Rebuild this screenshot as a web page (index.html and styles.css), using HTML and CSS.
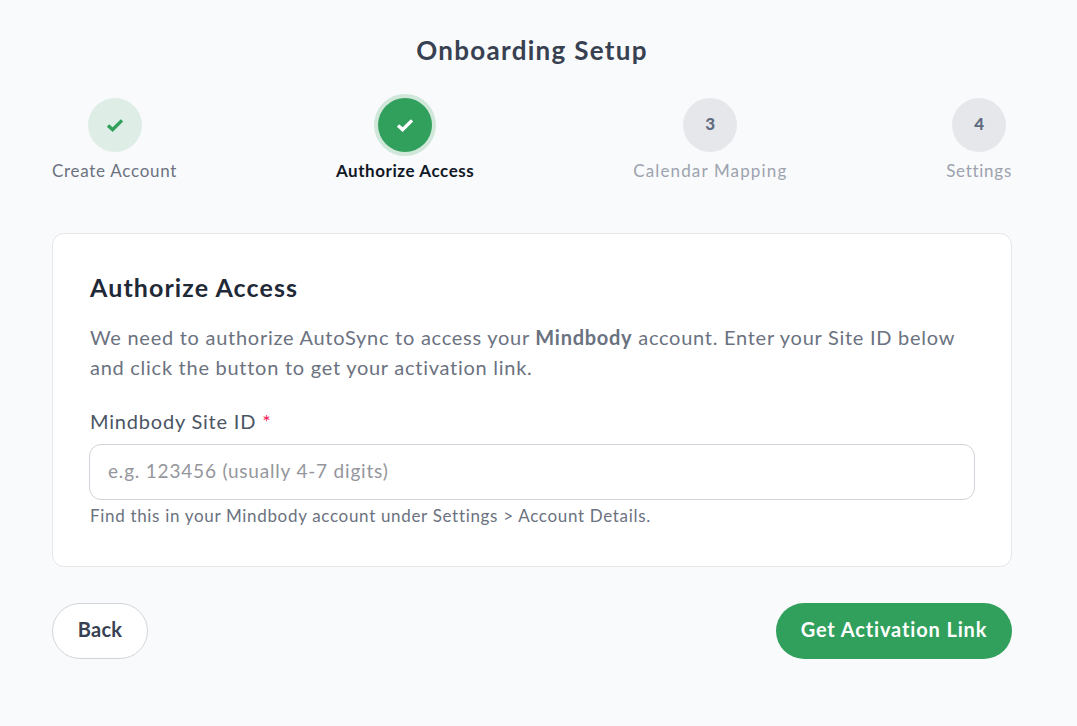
FILE: index.html
```html
<!DOCTYPE html>
<html lang="en">
<head>
<meta charset="utf-8">
<title>Onboarding Setup</title>
<link rel="stylesheet" href="styles.css">
</head>
<body>
<main class="page">
  <h1 class="title">Onboarding Setup</h1>
  <ol class="steps">
    <li class="step step-done">
      <span class="dot"><svg class="check" viewBox="0 0 18 14"><path d="M2 7.5 L6.6 11.6 L16 2.4"/></svg></span>
      <span class="step-label">Create Account</span>
    </li>
    <li class="step step-active">
      <span class="dot"><svg class="check" viewBox="0 0 18 14"><path d="M2 7.5 L6.6 11.6 L16 2.4"/></svg></span>
      <span class="step-label">Authorize Access</span>
    </li>
    <li class="step step-todo step-wide">
      <span class="dot"><span class="num">3</span></span>
      <span class="step-label">Calendar Mapping</span>
    </li>
    <li class="step step-todo">
      <span class="dot"><span class="num">4</span></span>
      <span class="step-label">Settings</span>
    </li>
  </ol>
  <section class="card">
    <h2 class="card-title">Authorize Access</h2>
    <p class="card-text">We need to authorize AutoSync to access your <strong>Mindbody</strong> account. Enter your Site ID below and click the button to get your activation link.</p>
    <label class="field-label" for="site">Mindbody Site ID <span class="req">*</span></label>
    <input class="field-input" id="site" type="text" placeholder="e.g. 123456 (usually 4-7 digits)">
    <p class="field-hint">Find this in your Mindbody account under Settings &gt; Account Details.</p>
  </section>
  <div class="actions">
    <button class="btn btn-back" type="button">Back</button>
    <button class="btn btn-primary" type="button">Get Activation Link</button>
  </div>
</main>
</body>
</html>
```
FILE: styles.css
```css
* { box-sizing: border-box; }
html, body { margin: 0; height: 100%; }
body {
  background: #f9fafb;
  color: #1f2937;
  font-family: "Lato", "Open Sans", sans-serif;
  padding-right: 13px;
}
.page {
  width: 960px;
  margin: 0 auto;
  padding-top: 34px;
}
.title {
  margin: 0;
  height: 32px;
  line-height: 32px;
  text-align: center;
  font-size: 26px;
  font-weight: 700;
  letter-spacing: 1.3px;
  color: #374151;
}
.steps {
  list-style: none;
  margin: 32px 0 0;
  padding: 0;
  display: flex;
  justify-content: space-between;
}
.step {
  display: flex;
  flex-direction: column;
  align-items: center;
}
.dot {
  width: 54px;
  height: 54px;
  border-radius: 50%;
  display: flex;
  align-items: center;
  justify-content: center;
  font-size: 17px;
  font-weight: 900;
}
.num { margin-bottom: 3px; }
.check {
  width: 18px;
  height: 14px;
  fill: none;
  stroke: currentColor;
  stroke-width: 3.4;
}
.step-label {
  margin-top: 9px;
  height: 20px;
  line-height: 20px;
  font-size: 17px;
  letter-spacing: 0.72px;
  white-space: nowrap;
}
.step-done .dot { background: #deede6; color: #31a05c; }
.step-done .step-label { color: #6b7280; }
.step-active .dot {
  background: #31a05c;
  color: #fff;
  box-shadow: 0 0 0 4px #d0e7d9;
}
.step-active .step-label { color: #111827; font-weight: 700; letter-spacing: 0.56px; }
.step-todo .dot { background: #e5e7eb; color: #616b80; }
.step-todo .step-label { color: #9ca3af; }
.step-wide .step-label { letter-spacing: 1.15px; }
.card {
  margin-top: 52px;
  height: 334px;
  padding: 36px 37px;
  background: #fff;
  border: 1px solid #e5e7eb;
  border-radius: 12px;
}
.card-title {
  margin: 0;
  height: 34px;
  line-height: 34px;
  font-size: 25px;
  font-weight: 700;
  letter-spacing: 1.1px;
  color: #1f2937;
}
.card-text {
  margin: 18px 0 0;
  line-height: 30px;
  font-size: 20px;
  letter-spacing: 0.73px;
  color: #6b7280;
}
.card-text strong { font-weight: 700; }
.field-label {
  display: block;
  margin-top: 27px;
  height: 24px;
  line-height: 24px;
  font-size: 20px;
  letter-spacing: 0.8px;
  color: #4b5563;
}
.req { color: #ef1450; font-size: 20px; }
.field-input {
  display: block;
  width: calc(100% + 2px);
  height: 56px;
  margin: 11px -1px 0;
  padding: 0 18px 4px;
  background: #fff;
  border: 1px solid #d1d5db;
  border-radius: 12px;
  font: 400 19px "Lato", "Open Sans", sans-serif;
  letter-spacing: 0.81px;
  color: #374151;
}
.field-input::placeholder { color: #94969c; opacity: 1; }
.field-hint {
  margin: 5px 0 0;
  height: 22px;
  line-height: 22px;
  font-size: 17px;
  letter-spacing: 0.68px;
  color: #6b7280;
}
.actions {
  margin-top: 36px;
  display: flex;
  justify-content: space-between;
}
.btn {
  height: 56px;
  padding: 0 0 4px;
  border-radius: 28px;
  font: 700 20px "Lato", "Open Sans", sans-serif;
  cursor: pointer;
}
.btn-back {
  width: 96px;
  background: #fff;
  border: 1px solid #d1d5db;
  color: #374151;
  letter-spacing: 0.3px;
}
.btn-primary {
  width: 236px;
  background: #31a05c;
  border: 0;
  color: #fff;
  letter-spacing: 0.86px;
}
```
